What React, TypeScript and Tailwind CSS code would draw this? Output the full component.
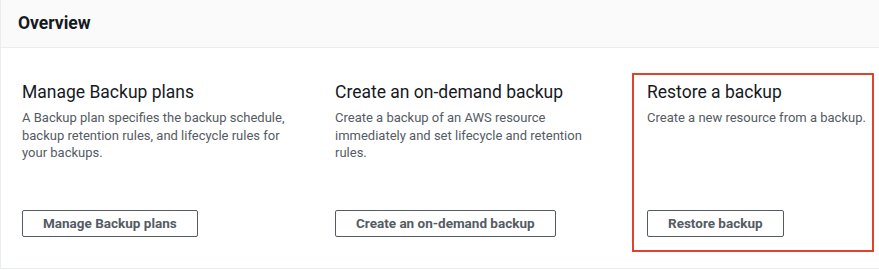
import React from "react";

type Item = { title: string; desc: string; button: string; highlight?: boolean; width: string };

const items: Item[] = [
  {
    title: "Manage Backup plans",
    desc: "A Backup plan specifies the backup schedule, backup retention rules, and lifecycle rules for your backups.",
    button: "Manage Backup plans",
    width: "w-[313px]",
  },
  {
    title: "Create an on-demand backup",
    desc: "Create a backup of an AWS resource immediately and set lifecycle and retention rules.",
    button: "Create an on-demand backup",
    width: "w-[312px]",
  },
  {
    title: "Restore a backup",
    desc: "Create a new resource from a backup.",
    button: "Restore backup",
    highlight: true,
    width: "w-[242px]",
  },
];

export default function App() {
  return (
    <div className="w-[879px] h-[270px] bg-white font-['Roboto','Liberation_Sans',sans-serif] overflow-hidden">
      <div className="border-l border-b border-[#eaeded] h-[269px] flex flex-col">
        <div className="h-[48px] bg-[#fafafa] border-b border-[#eaeded] flex items-center pl-[17px] shrink-0">
          <h2 className="text-[17.5px] font-bold text-[#16191f] leading-none">Overview</h2>
        </div>
        <div className="flex pl-[6px] pt-[25px]">
          {items.map((it) => (
            <div
              key={it.title}
              className={`${it.width} h-[179px] flex flex-col pl-[13px] pt-[6px] pb-[13px] border-2 ${
                it.highlight ? "border-[#de4330]" : "border-transparent"
              }`}
            >
              <h3 className="text-[17.5px] leading-[22px] text-[#16191f] font-normal">{it.title}</h3>
              <p className="mt-[6px] max-w-[265px] text-[13px] leading-[17.5px] text-[#545b64]">{it.desc}</p>
              <div className="mt-auto">
                <button className="h-[27px] px-[20px] border border-[#545b64] rounded-[2px] bg-white text-[13.5px] font-bold text-[#545b64] leading-none">
                  {it.button}
                </button>
              </div>
            </div>
          ))}
        </div>
      </div>
    </div>
  );
}
